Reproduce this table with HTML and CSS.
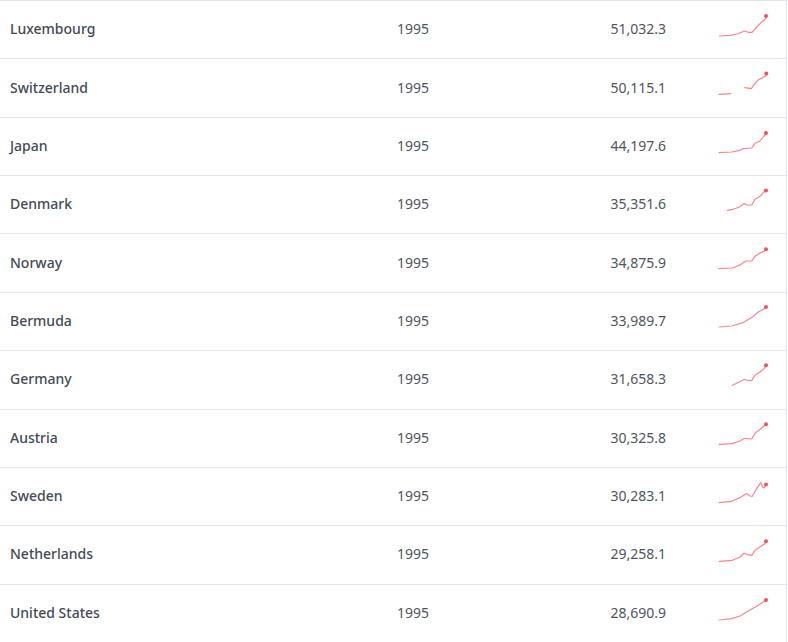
FILE: index.html
```html
<!DOCTYPE html>
<html lang="en">
<head>
<meta charset="utf-8">
<title>GDP per capita 1995</title>
<link rel="stylesheet" href="styles.css">
</head>
<body>
<div class="table">
  <div class="row">
    <div class="name">Luxembourg</div><div class="year">1995</div><div class="value">51,032.3</div>
    <div class="spark"><svg viewBox="0 0 56 34" width="56" height="34"><polyline points="3.3,23 14,22.3 20.7,21 29,18 32,19.3 36,19.3 40.7,14 45.7,9 48,7.3 50,5"/><circle cx="50" cy="3" r="2"/></svg></div>
  </div>
  <div class="row">
    <div class="name">Switzerland</div><div class="year">1995</div><div class="value">50,115.1</div>
    <div class="spark"><svg viewBox="0 0 56 34" width="56" height="34"><polyline points="3,23.3 14.7,22.6"/><polyline points="28.7,16.6 35.3,17.6 38.7,12.6 42.7,8.6 47,6.6 50,4.6"/><circle cx="50.3" cy="2.6" r="2"/></svg></div>
  </div>
  <div class="row">
    <div class="name">Japan</div><div class="year">1995</div><div class="value">44,197.6</div>
    <div class="spark"><svg viewBox="0 0 56 34" width="56" height="34"><polyline points="3,23.6 15.7,23 24,21.3 27.3,19.6 35.7,19 39,14.3 44,12 48,7 50,5"/><circle cx="50" cy="4" r="2"/></svg></div>
  </div>
  <div class="row">
    <div class="name">Denmark</div><div class="year">1995</div><div class="value">35,351.6</div>
    <div class="spark"><svg viewBox="0 0 56 34" width="56" height="34"><polyline points="11.3,22.3 17.3,21.3 23.3,19 28.3,15.6 30.7,17 35.7,17 39,11.3 44,8.3 48,4 50,3.5"/><circle cx="50" cy="2.6" r="2"/></svg></div>
  </div>
  <div class="row">
    <div class="name">Norway</div><div class="year">1995</div><div class="value">34,875.9</div>
    <div class="spark"><svg viewBox="0 0 56 34" width="56" height="34"><polyline points="3,22.6 16.3,22 24.7,18.6 29.7,15 35.7,15 39,10.3 44,7 48,5.3 50,4"/><circle cx="50" cy="3.3" r="2"/></svg></div>
  </div>
  <div class="row">
    <div class="name">Bermuda</div><div class="year">1995</div><div class="value">33,989.7</div>
    <div class="spark"><svg viewBox="0 0 56 34" width="56" height="34"><polyline points="3,23 15.7,22 27.3,18.6 35.7,13.6 42.3,8 47.3,5.3 50,3.5"/><circle cx="50" cy="3" r="2"/></svg></div>
  </div>
  <div class="row">
    <div class="name">Germany</div><div class="year">1995</div><div class="value">31,658.3</div>
    <div class="spark"><svg viewBox="0 0 56 34" width="56" height="34"><polyline points="16.3,22.3 23.3,19 28.3,16.3 30.7,17.3 35.7,17.6 39,12.3 44,9 48,5.6 50,3"/><circle cx="50" cy="2.3" r="2"/></svg></div>
  </div>
  <div class="row">
    <div class="name">Austria</div><div class="year">1995</div><div class="value">30,325.8</div>
    <div class="spark"><svg viewBox="0 0 56 34" width="56" height="34"><polyline points="3,23.3 16.3,22.6 24,20 28.3,17.3 35.7,18 39,12.3 44,8.3 48,5 50,4"/><circle cx="50" cy="3.3" r="2"/></svg></div>
  </div>
  <div class="row">
    <div class="name">Sweden</div><div class="year">1995</div><div class="value">30,283.1</div>
    <div class="spark"><svg viewBox="0 0 56 34" width="56" height="34"><polyline points="3,22.6 15.7,21.3 23.3,18 30.7,13.6 34,16 36.3,16.3 40.7,8.6 44.7,2.6 46.7,7 48,8 50,5.5"/><circle cx="50" cy="4.6" r="2"/></svg></div>
  </div>
  <div class="row">
    <div class="name">Netherlands</div><div class="year">1995</div><div class="value">29,258.1</div>
    <div class="spark"><svg viewBox="0 0 56 34" width="56" height="34"><polyline points="3,23.3 16.3,22.3 24,19 28.3,15 30.7,16.6 35.7,17.3 39,12.3 44,9 48,6.3 50,4.3"/><circle cx="50" cy="3.3" r="2"/></svg></div>
  </div>
  <div class="row">
    <div class="name">United States</div><div class="year">1995</div><div class="value">28,690.9</div>
    <div class="spark"><svg viewBox="0 0 56 34" width="56" height="34"><polyline points="3,24 15.7,22.6 24,20 32.3,15 42.3,9.3 48,5.6 50,4.8"/><circle cx="50" cy="4" r="2"/></svg></div>
  </div>
</div>
</body>
</html>
```

FILE: styles.css
```css
html, body {
  margin: 0;
  padding: 0;
  background: #ffffff;
}

.table {
  width: 787px;
  box-sizing: border-box;
  border-right: 1px solid #e3e6ea;
  font-family: "Noto Sans", "Open Sans", sans-serif;
  font-size: 14px;
}

.row {
  display: grid;
  grid-template-columns: 397px 160px 109px 1fr;
  align-items: center;
  height: 58.36px;
  box-sizing: border-box;
  border-top: 1px solid #e3e6ea;
}

.name,
.year,
.value {
  padding-bottom: 2px;
}

.name {
  padding-left: 10px;
  font-weight: 500;
  color: #434a55;
}

.year {
  color: #50555d;
}

.value {
  text-align: right;
  color: #50555d;
}

.spark {
  padding-left: 50px;
  display: flex;
  align-items: center;
}

.spark svg {
  display: block;
  overflow: visible;
}

.spark polyline {
  fill: none;
  stroke: #f4898e;
  stroke-width: 1.2;
  stroke-linejoin: round;
  stroke-linecap: round;
}

.spark circle {
  fill: #f2505a;
}
```
